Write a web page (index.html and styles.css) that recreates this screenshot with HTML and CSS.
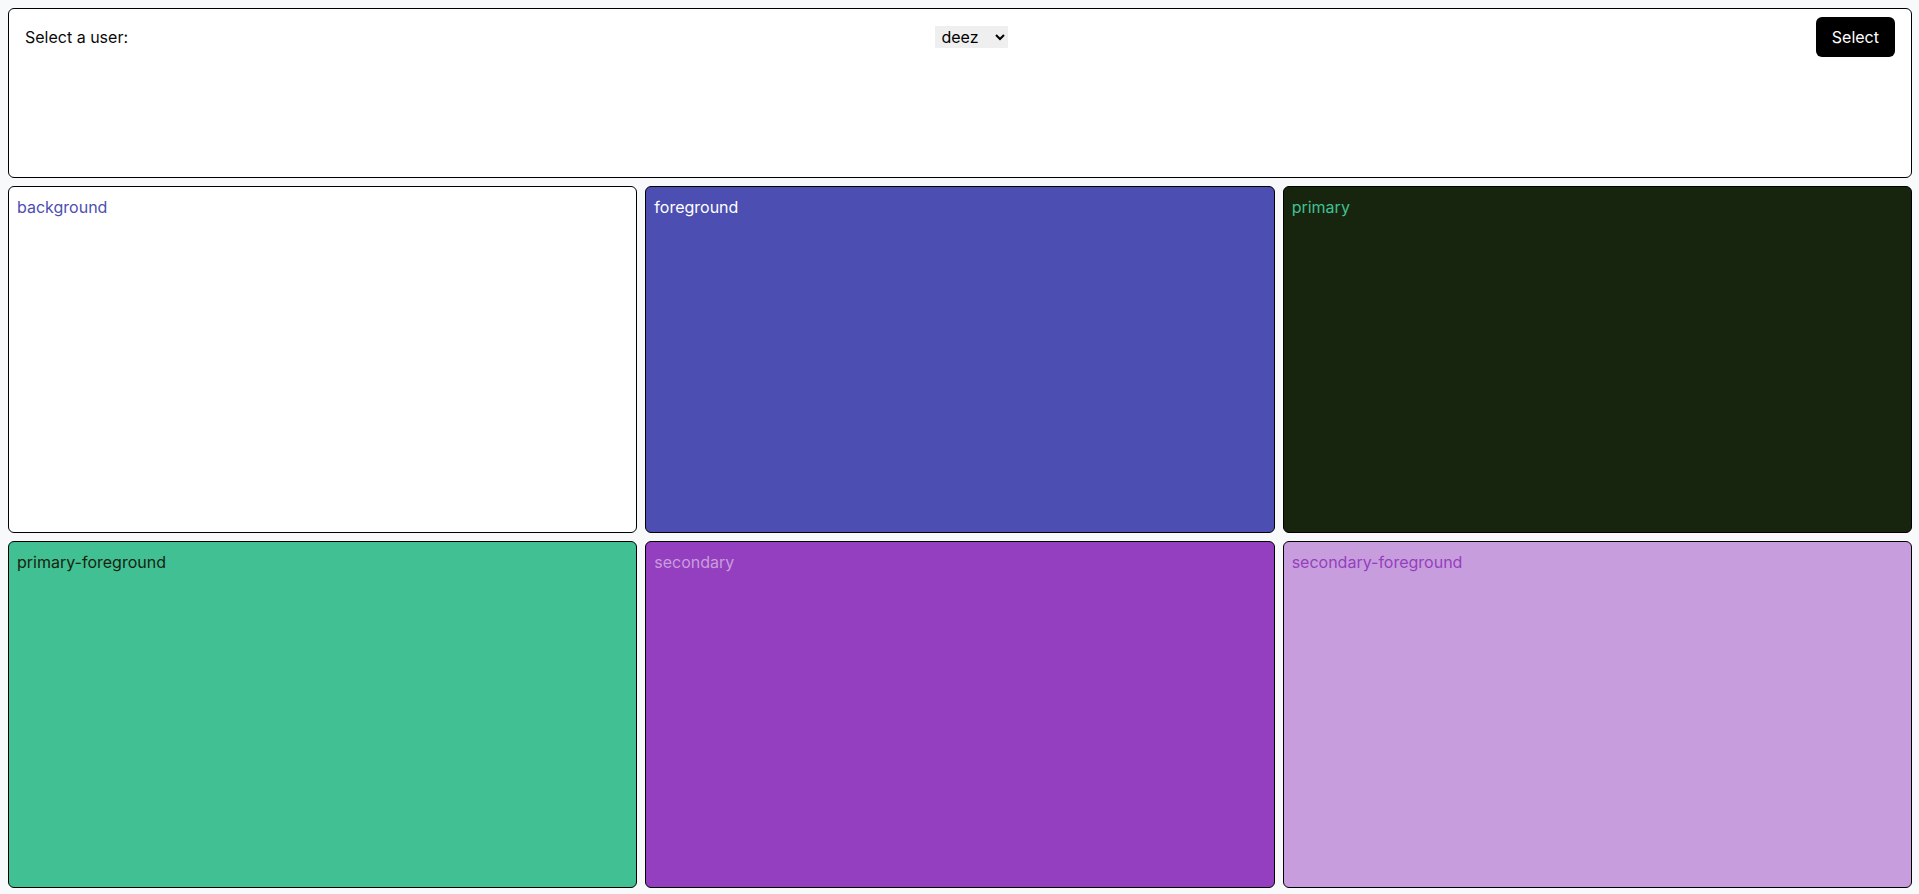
FILE: index.html
```html
<!DOCTYPE html>
<html>
<head>
<meta charset="utf-8">
<link rel="stylesheet" href="styles.css">
</head>
<body>
<div class="page">
  <div class="picker">
    <span class="label">Select a user:</span>
    <select class="user-select">
      <option>deez</option>
    </select>
    <button class="btn">Select</button>
  </div>
  <div class="swatches">
    <div class="swatch s-bg">background</div>
    <div class="swatch s-fg">foreground</div>
    <div class="swatch s-primary">primary</div>
    <div class="swatch s-primary-fg">primary-foreground</div>
    <div class="swatch s-secondary">secondary</div>
    <div class="swatch s-secondary-fg">secondary-foreground</div>
  </div>
</div>
</body>
</html>
```
FILE: styles.css
```css
* { box-sizing: border-box; }
html, body { margin: 0; padding: 0; }
body {
  background: #f8f9fb;
  font-family: Inter, "Liberation Sans", sans-serif;
  font-size: 16px;
  line-height: 24px;
  color: #000;
}
.page {
  padding: 8px 7px 8px 8px;
  display: flex;
  flex-direction: column;
  gap: 8px;
}
.picker {
  height: 170px;
  background: #fff;
  border: 1px solid #000;
  border-radius: 6px;
  padding: 8px 16px;
  display: flex;
  justify-content: space-between;
  align-items: flex-start;
}
.label {
  line-height: 40px;
  color: #0a0a0a;
}
.user-select {
  margin-top: 9px;
  height: 22px;
  font-family: Inter, "Liberation Sans", sans-serif;
  font-size: 16px;
  border: none;
  background: #efefef;
  color: #000;
  padding: 0 2px;
  width: 73px;
}
.btn {
  height: 40px;
  padding: 0 16px;
  background: #000;
  color: #fff;
  border: none;
  border-radius: 6px;
  font-family: Inter, "Liberation Sans", sans-serif;
  font-size: 16px;
}
.swatches {
  display: grid;
  grid-template-columns: repeat(3, 1fr);
  grid-auto-rows: 347px;
  gap: 8px;
}
.swatch {
  border: 1px solid #000;
  border-radius: 6px;
  padding: 8px;
}
.s-bg { background: #ffffff; color: #4c4eb2; }
.s-fg { background: #4c4eb2; color: #ffffff; }
.s-primary { background: #17240e; color: #41c094; }
.s-primary-fg { background: #41c094; color: #17240e; }
.s-secondary { background: #943fbf; color: #c89ddd; }
.s-secondary-fg { background: #c89ddd; color: #943fbf; }
```
